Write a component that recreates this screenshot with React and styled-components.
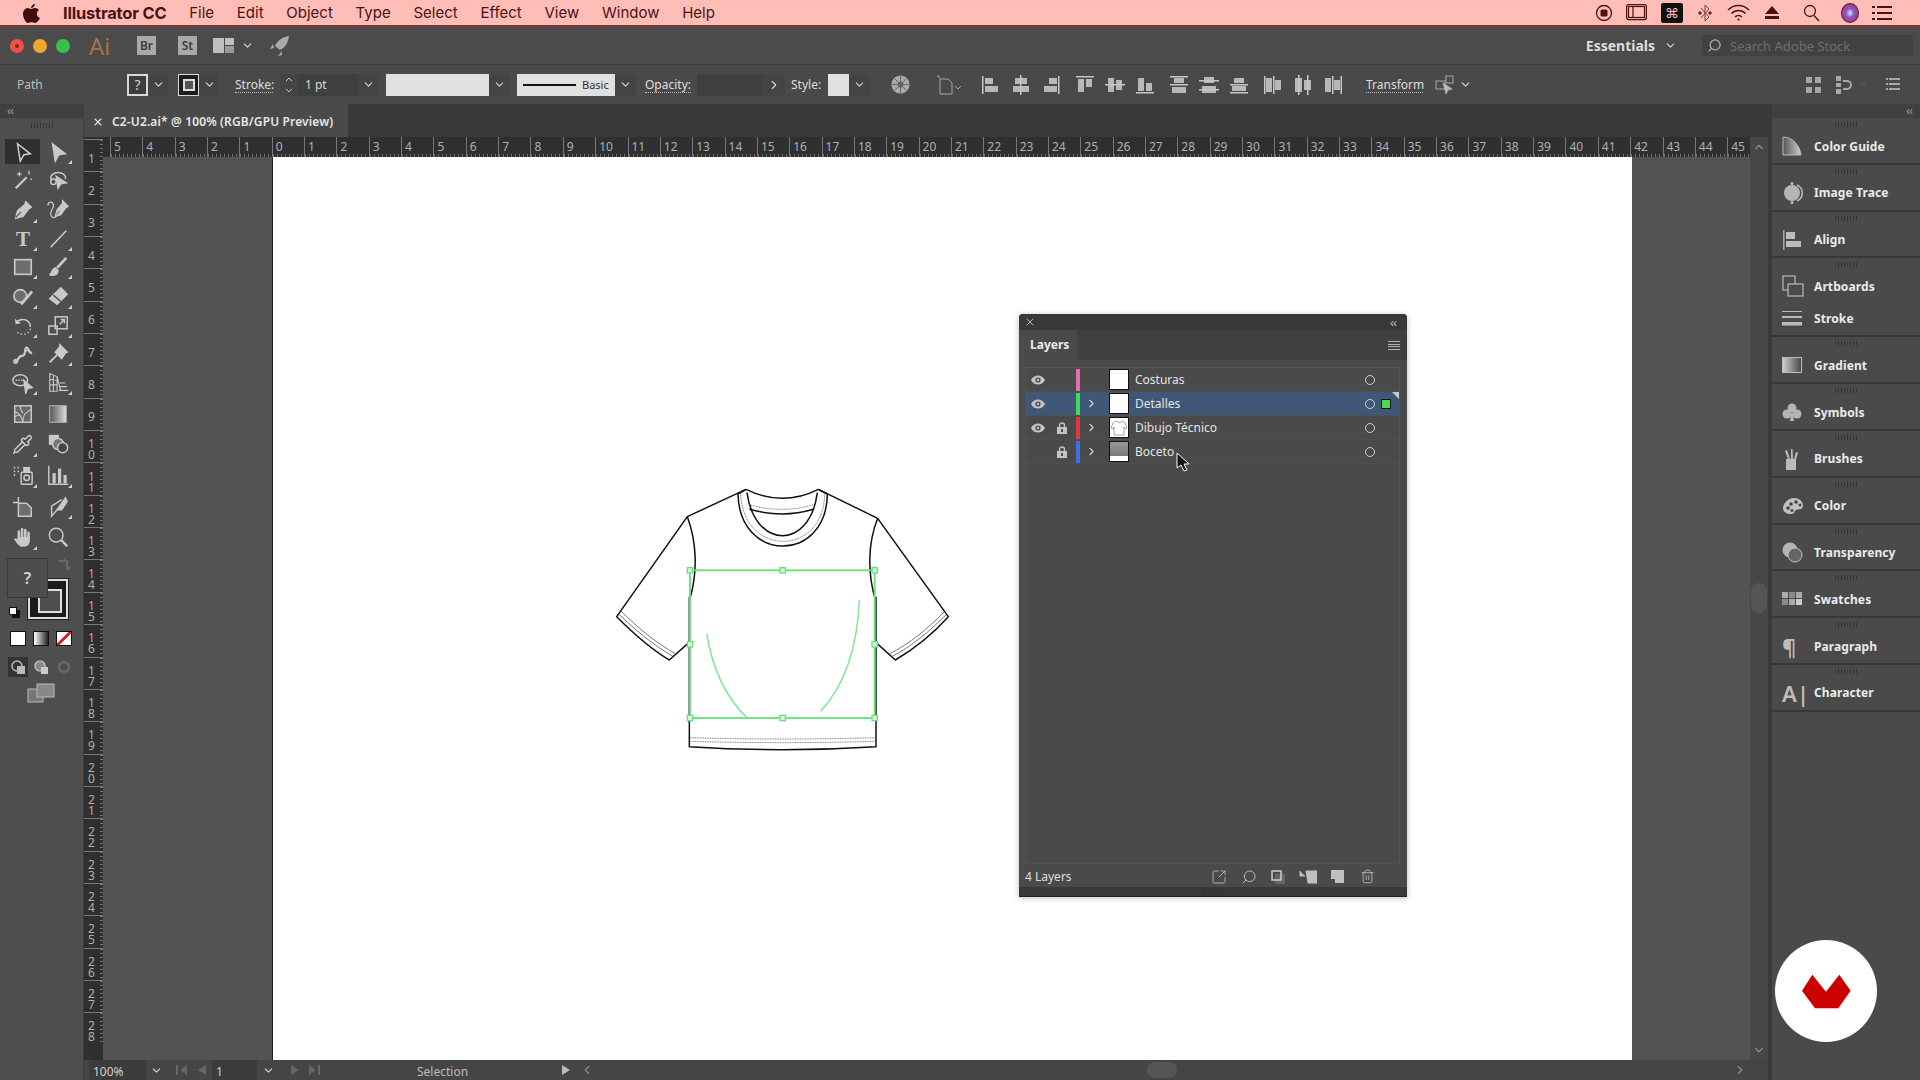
import React from 'react';
import styled, { createGlobalStyle } from 'styled-components';
import { Pipette, Search, Trash2, ChevronDown, ChevronUp, ChevronRight, ChevronLeft, X, SquareArrowOutUpRight } from 'lucide-react';

const UI_FONT = '"Noto Sans", "Open Sans", sans-serif';

const GlobalStyle = createGlobalStyle`
  html, body { margin: 0; padding: 0; background: #4a4a4a; overflow: hidden; }
  * { box-sizing: border-box; }
`;

const Root = styled.div`
  position: relative;
  width: 1920px;
  height: 1080px;
  display: flex;
  flex-direction: column;
  overflow: hidden;
  font-family: ${ UI_FONT };
  color: #ddd;
  font-size: 12px;
`;

/* ---------- mac menu bar ---------- */
const MenuBar = styled.div`
  height: 27px;
  flex: none;
  display: flex;
  align-items: center;
  background: #ffbdb8;
  border-bottom: 2px solid #7c3a36;
  padding-left: 22px;
  color: #4d1210;
  font-family: Inter, "Liberation Sans", sans-serif;
  font-size: 15px;
`;
const AppleMark = styled.svg`
  width: 18px;
  height: 20px;
  margin-right: 23px;
  fill: #3d0e0d;
`;
const MenuItem = styled.span`
  margin-right: 22.75px;
  font-weight: ${ p => p.$bold ? 700 : 400 };
  font-size: ${ p => p.$bold ? 16.5 : 15 }px;
  letter-spacing: ${ p => p.$bold ? '-0.2px' : '0' };
`;
const StatusIcons = styled.div`
  margin-left: auto;
  display: flex;
  align-items: center;
  padding-right: 28px;
`;
const StatusIcon = styled.svg`
  display: block;
  margin-left: ${ p => p.$ml }px;
`;

/* ---------- app title bar ---------- */
const TitleBar = styled.div`
  height: 38px;
  flex: none;
  display: flex;
  align-items: center;
  background: #4b4b4b;
  border-bottom: 1px solid #3a3a3a;
  padding-left: 10px;
`;
const Light = styled.span`
  width: 14px;
  height: 14px;
  border-radius: 50%;
  background: ${ p => p.$c };
  margin-right: 9px;
  display: flex;
  align-items: center;
  justify-content: center;
  &::after {
    content: '';
    width: 4px;
    height: 4px;
    border-radius: 50%;
    background: ${ p => p.$dot || 'transparent' };
  }
`;
const AiMark = styled.span`
  margin-left: 10px;
  width: 48px;
  color: #a8724e;
  font-size: 24px;
  line-height: 28px;
  font-family: "Open Sans", sans-serif;
`;
const BridgeBox = styled.span`
  width: 19px;
  height: 19px;
  margin-right: ${ p => p.$mr }px;
  background: #a9a9a9;
  color: #3c3c3c;
  font-size: 12px;
  font-weight: 600;
  text-align: center;
  line-height: 19px;
`;
const RocketIcon = styled.svg`
  margin-left: 10px;
`;
const WorkspaceEnd = styled.div`
  margin-left: auto;
  display: flex;
  align-items: center;
  padding-right: 7px;
`;
const Essentials = styled.span`
  font-size: 14px;
  font-weight: 700;
  color: #dcdcdc;
`;
const SearchStock = styled.div`
  width: 211px;
  height: 21px;
  margin-left: 17px;
  display: flex;
  align-items: center;
  padding-left: 5px;
  background: #424242;
  color: #6f6f6f;
  font-size: 13px;
  border-radius: 2px;
  gap: 8px;
`;
const FlippedSearch = styled(Search)`
  transform: scaleX(-1);
`;

/* ---------- control bar ---------- */
const ControlBar = styled.div`
  height: 39px;
  flex: none;
  display: flex;
  align-items: center;
  background: #494949;
  padding-left: 17px;
`;
const PathLabel = styled.span`
  width: 110px;
  color: #bdbdbd;
  font-size: 12px;
`;
const QuestionBox = styled.span`
  width: 21px;
  height: 22px;
  border: 2px solid #d8d8d8;
  background: #3d3d3d;
  color: #cfcfcf;
  font-size: 14px;
  line-height: 18px;
  text-align: center;
`;
const StrokeBox = styled.span`
  width: 21px;
  height: 22px;
  margin-left: ${ p => p.$ml }px;
  border: 1px solid #d8d8d8;
  background: #1c1c1c;
  display: flex;
  align-items: center;
  justify-content: center;
  &::after {
    content: '';
    width: 8px;
    height: 8px;
    border: 2px solid #ddd;
    background: #555;
  }
`;
const Chevron = styled.span`
  width: ${ p => p.$w || 20 }px;
  height: 22px;
  flex: none;
  margin-left: ${ p => p.$ml || 0 }px;
  display: flex;
  align-items: center;
  justify-content: center;
  background: ${ p => p.$flat ? 'transparent' : '#444' };
  color: #d8d8d8;
`;
const DotLabel = styled.span`
  margin-left: ${ p => p.$ml }px;
  width: ${ p => p.$w }px;
  flex: none;
  color: #dedede;
  font-size: 12px;
  line-height: 15px;
  white-space: nowrap;
  border-bottom: ${ p => p.$plain ? 'none' : '1px dotted #bbb' };
`;
const Spinner = styled.span`
  margin-left: 7px;
  width: 18px;
  height: 22px;
  display: flex;
  flex-direction: column;
  align-items: center;
  justify-content: center;
  background: #444;
  color: #ddd;
`;
const ValueField = styled.span`
  width: ${ p => p.$w }px;
  height: 22px;
  flex: none;
  margin-left: ${ p => p.$ml || 0 }px;
  padding-left: 7px;
  line-height: 22px;
  background: #3f3f3f;
  color: #d5d5d5;
`;
const LightSwatch = styled.span`
  width: ${ p => p.$w }px;
  height: 22px;
  flex: none;
  margin-left: ${ p => p.$ml }px;
  background: #e0e0e0;
`;
const StrokePreview = styled.span`
  width: 98px;
  height: 22px;
  margin-left: 8px;
  flex: none;
  display: flex;
  align-items: center;
  padding-left: 6px;
  background: #e0e0e0;
  color: #333;
  font-size: 11px;
  &::before {
    content: '';
    width: 53px;
    height: 2px;
    margin-right: 6px;
    background: #111;
  }
`;
const AlignGroups = styled.div`
  display: flex;
  margin-left: 14px;
  gap: 4px;
`;
const AlignGroup = styled.div`
  display: flex;
`;
const AlignCell = styled.span`
  width: 30px;
  display: flex;
  justify-content: center;
`;
const ControlEnd = styled.div`
  margin-left: auto;
  display: flex;
  align-items: center;
  padding-right: 20px;
`;
const ArrangeIcon = styled.svg`
  margin-left: 15px;
`;
const ListIcon = styled.svg`
  margin-left: 12px;
`;

/* ---------- workspace ---------- */
const Workspace = styled.div`
  flex: 1;
  min-height: 0;
  display: flex;
`;
const Toolbar = styled.div`
  width: 84px;
  flex: none;
  background: #4e4e4e;
  border-right: 1px solid #3f3f3f;
`;
const CollapseStrip = styled.div`
  height: 14px;
  background: #404040;
  color: #9a9a9a;
  font-size: 13px;
  line-height: 13px;
  padding: 0 ${ p => p.$right ? '8px' : '0' } 0 ${ p => p.$right ? '0' : '7px' };
  text-align: ${ p => p.$right ? 'right' : 'left' };
  letter-spacing: -1px;
`;
const Grip = styled.div`
  width: 22px;
  height: 5px;
  margin: ${ p => p.$m || '5px auto 9px' };
  background: repeating-linear-gradient(90deg, #2f2f2f 0 1px, transparent 1px 3px);
  opacity: .8;
`;
const ToolRow = styled.div`
  height: ${ p => p.$h }px;
  display: grid;
  grid-template-columns: 35px 35px;
  padding-left: 5px;
  align-items: center;
`;
const Tool = styled.span`
  position: relative;
  height: 25px;
  display: flex;
  align-items: center;
  justify-content: center;
  color: #c9c9c9;
  background: ${ p => p.$active ? '#2f2f2f' : 'transparent' };
  &::after {
    content: '';
    display: ${ p => p.$fly ? 'block' : 'none' };
    position: absolute;
    right: 3px;
    bottom: 0;
    border-left: 4px solid transparent;
    border-bottom: 4px solid #d0d0d0;
  }
`;
const ColorWell = styled.div`
  position: relative;
  height: 70px;
`;
const Tooltip = styled.span`
  position: absolute;
  z-index: 2;
  left: 7px;
  top: 6px;
  width: 41px;
  height: 40px;
  background: #4d4d4d;
  border: 1px solid #3a3a3a;
  color: #d5d5d5;
  font-size: 16px;
  font-weight: 600;
  line-height: 38px;
  text-align: center;
`;
const StrokeWell = styled.span`
  position: absolute;
  left: 28px;
  top: 27px;
  width: 40px;
  height: 40px;
  background: #1c1c1c;
  border: 2px solid #ddd;
  outline: 1px solid #222;
  &::after {
    content: '';
    position: absolute;
    left: 8px;
    top: 8px;
    width: 20px;
    height: 20px;
    border: 2px solid #ddd;
    background: #4e4e4e;
  }
`;
const DefaultColors = styled.span`
  position: absolute;
  left: 9px;
  top: 55px;
  width: 8px;
  height: 8px;
  background: #fff;
  border: 1px solid #111;
  box-shadow: 3px 3px 0 0 #111;
`;
const SwapArrow = styled.svg`
  position: absolute;
  left: 58px;
  top: 6px;
`;
const ModeRow = styled.div`
  height: ${ p => p.$h }px;
  display: grid;
  grid-template-columns: 22px 23px 24px;
  padding-left: 7px;
  align-items: center;
  justify-items: center;
`;
const ModeSwatch = styled.span`
  width: 16px;
  height: 15px;
  border: 1px solid #111;
  background: ${ p => p.$bg };
`;
const DrawMode = styled.span`
  width: ${ p => p.$w }px;
  height: 20px;
  display: flex;
  align-items: center;
  justify-content: center;
  background: ${ p => p.$active ? '#333' : 'transparent' };
`;
const ScreenMode = styled.div`
  display: flex;
  justify-content: center;
  height: 26px;
  align-items: center;
  padding-right: 2px;
`;

const Center = styled.div`
  width: 1684px;
  flex: none;
  display: flex;
  flex-direction: column;
`;
const TabRow = styled.div`
  height: 33px;
  flex: none;
  display: flex;
  background: #393939;
`;
const DocTab = styled.div`
  width: 264px;
  display: flex;
  align-items: center;
  padding: 2px 0 0 8px;
  gap: 8px;
  background: #4a4a4a;
  color: #e6e6e6;
  font-size: 12px;
  letter-spacing: .14px;
  font-weight: 600;
`;
const DocRow = styled.div`
  flex: 1;
  min-height: 0;
  display: flex;
`;
const LeftRuler = styled.div`
  width: 19px;
  flex: none;
  padding-top: 2px;
  background: #2f2f2f;
  overflow: hidden;
`;
const VCell = styled.div`
  height: 32.35px;
  display: flex;
  align-items: center;
  padding-top: 5px;
  border-top: 1px solid #777;
  background: repeating-linear-gradient(180deg, #707070 0 1px, transparent 1px 4px) right top / 3px 100% no-repeat;
`;
const VLabel = styled.span`
  width: 15px;
  padding: 0 4px;
  color: #b0b0b0;
  font-size: 12px;
  line-height: 11px;
  text-align: center;
  word-break: break-all;
`;
const MainCol = styled.div`
  width: 1647px;
  flex: none;
  display: flex;
  flex-direction: column;
`;
const TopRuler = styled.div`
  height: 20px;
  flex: none;
  display: flex;
  padding-left: 7px;
  background: #2f2f2f;
  overflow: hidden;
`;
const HCell = styled.div`
  width: 32.35px;
  flex: none;
  padding-left: 3px;
  border-left: 1px solid #777;
  color: #b0b0b0;
  font-size: 12px;
  line-height: 19px;
  background: repeating-linear-gradient(90deg, #707070 0 1px, transparent 1px 4px) left bottom / 100% 3px no-repeat;
`;
const Canvas = styled.div`
  flex: 1;
  min-height: 0;
  display: flex;
  background: #535353;
  padding-left: 169px;
`;
const Artboard = styled.div`
  position: relative;
  width: 1360px;
  height: 100%;
  background: #fff;
  border-left: 1px solid #222;
`;
const ShirtDrawing = styled.svg`
  position: absolute;
  left: 327px;
  top: 313px;
`;
const VScroll = styled.div`
  width: 18px;
  flex: none;
  display: flex;
  flex-direction: column;
  align-items: center;
  justify-content: space-between;
  padding: 3px 0;
  background: #474747;
  color: #8a8a8a;
`;
const VThumb = styled.span`
  position: absolute;
  left: 1751px;
  top: 583px;
  width: 16px;
  height: 30px;
  border-radius: 8px;
  background: #555;
`;
const StatusBar = styled.div`
  height: 20px;
  flex: none;
  display: flex;
  align-items: center;
  padding-left: 5px;
  background: #454545;
  color: #d0d0d0;
`;
const StatusField = styled.span`
  width: ${ p => p.$w }px;
  height: 20px;
  flex: none;
  padding-left: 4px;
  line-height: 24px;
  background: #3c3c3c;
  margin-left: ${ p => p.$ml || 0 }px;
`;
const NavArrow = styled.svg`
  flex: none;
  margin-left: ${ p => p.$ml }px;
`;
const StatusText = styled.span`
  margin-left: ${ p => p.$ml }px;
  width: ${ p => p.$w }px;
  flex: none;
  padding-top: 3px;
  color: #bdbdbd;
`;
const HScroll = styled.div`
  flex: 1;
  display: flex;
  align-items: center;
  justify-content: space-between;
  padding: 0 21px 0 10px;
  color: #8a8a8a;
`;
const HThumb = styled.span`
  position: absolute;
  left: 1147px;
  top: 1062px;
  width: 30px;
  height: 16px;
  border-radius: 8px;
  background: #555;
`;

/* ---------- dock ---------- */
const Dock = styled.div`
  flex: 1;
  background: #4a4a4a;
  border-left: 4px solid #3a3a3a;
`;
const DockGroup = styled.div`
  border-bottom: 2px solid #383838;
  padding-top: 4px;
  height: ${ p => p.$double ? 79 : 46.8 }px;
`;
const DockItem = styled.div`
  height: 28px;
  margin-bottom: 4px;
  display: flex;
  align-items: center;
  padding-left: 10px;
  font-size: 12px;
  font-weight: 700;
  color: #ebebeb;
  letter-spacing: .1px;
`;
const DockIcon = styled.span`
  width: 32px;
  flex: none;
  display: flex;
  align-items: center;
  color: #bdbdbd;
  font-size: 22px;
  line-height: 24px;
  font-weight: 600;
`;

/* ---------- layers panel ---------- */
const LayersPanel = styled.div`
  position: absolute;
  left: 1019px;
  top: 314px;
  width: 388px;
  height: 583px;
  display: flex;
  flex-direction: column;
  background: #4a4a4a;
  border-radius: 4px 4px 0 0;
  box-shadow: 0 1px 6px rgba(0, 0, 0, .25);
`;
const PanelHead = styled.div`
  height: 16px;
  flex: none;
  display: flex;
  align-items: center;
  justify-content: space-between;
  padding: 0 11px 0 5px;
  background: #393939;
  border-radius: 4px 4px 0 0;
  color: #b5b5b5;
  font-size: 13px;
  letter-spacing: -1px;
`;
const PanelTabs = styled.div`
  height: 30px;
  flex: none;
  display: flex;
  align-items: center;
  justify-content: space-between;
  padding-right: 7px;
  background: #404040;
`;
const LayersTab = styled.span`
  width: 58px;
  height: 30px;
  padding-left: 11px;
  line-height: 30px;
  background: #4a4a4a;
  font-weight: 700;
  font-size: 12px;
  color: #ececec;
`;
const MenuLines = styled.span`
  width: 12px;
  height: 9px;
  background: repeating-linear-gradient(180deg, #b0b0b0 0 1px, transparent 1px 2.6px);
`;
const LayerList = styled.div`
  flex: 1;
  margin: 7px 7px 0 6px;
  border: 1px solid #525252;
  border-top-color: #555;
`;
const LayerRow = styled.div`
  position: relative;
  height: 24px;
  display: flex;
  align-items: center;
  border-bottom: 1px solid #505050;
  background: ${ p => p.$selected ? '#3f5878' : 'transparent' };
  &::after {
    content: '';
    display: ${ p => p.$selected ? 'block' : 'none' };
    position: absolute;
    right: 0;
    top: 0;
    border-left: 7px solid transparent;
    border-top: 7px solid #c8c8c8;
  }
`;
const VisCell = styled.span`
  width: 24px;
  flex: none;
  display: flex;
  justify-content: center;
`;
const LayerColor = styled.span`
  width: 4px;
  height: 22px;
  flex: none;
  margin-left: 2px;
  background: ${ p => p.$c };
`;
const Expand = styled.span`
  width: 22px;
  flex: none;
  display: flex;
  justify-content: center;
  color: #d5d5d5;
`;
const Thumb = styled.span`
  width: 20px;
  height: 21px;
  flex: none;
  margin-left: 7px;
  border: 1px solid #111;
  background: ${ p => p.$bg || '#fff' };
  overflow: hidden;
`;
const LayerName = styled.span`
  margin-left: 6px;
  flex: 1;
  color: #e4e4e4;
  font-size: 12px;
`;
const TargetRing = styled.span`
  width: 10px;
  height: 10px;
  flex: none;
  border: 1px solid #d0d0d0;
  border-radius: 50%;
  margin-right: ${ p => p.$selected ? '7px' : '24px' };
`;
const SelectedDot = styled.span`
  width: 8px;
  height: 8px;
  flex: none;
  margin-right: 9px;
  background: #4fd84f;
  outline: 1px solid #111;
`;
const PanelFoot = styled.div`
  height: 23px;
  flex: none;
  display: flex;
  align-items: center;
  padding: 2px 0 0 6px;
  color: #ddd;
`;
const FootIcons = styled.div`
  margin-left: auto;
  display: flex;
  align-items: center;
  padding-right: 25px;
  color: #bdbdbd;
`;
const FootCell = styled.span`
  width: 29.6px;
  display: flex;
  justify-content: center;
`;
const ResizeStrip = styled.div`
  height: 10px;
  flex: none;
  background: #383838;
  border-bottom: 1px solid #222;
`;
const CursorMark = styled.svg`
  position: absolute;
  left: 157px;
  top: 138px;
`;
const LogoBadge = styled.svg`
  position: absolute;
  left: 1775px;
  top: 940px;
`;

/* ---------- drawn icons ---------- */
const G = '#c9c9c9';
const Ic = ({ s = 22, children }) => (
  <svg width={ s } height={ s } viewBox='0 0 24 24' fill='none' stroke={ G } strokeWidth='1.6'>{ children }</svg>
);

const TOOL_ICONS = {
  select: <Ic><path d='M6 3l14 11-7 1-4 7z' stroke='#d4d4d4' /></Ic>,
  direct: <Ic><path d='M6 3l14 11-7 1-4 7z' fill={ G } /></Ic>,
  wand: <Ic><path d='M4 21L16 9' strokeWidth='2.6' /><path d='M8 3v5M5.500 5.500h5M18 2l1 2-1 2M20 11h2' strokeWidth='1.3' /></Ic>,
  lasso: <Ic><path d='M5 13c-3-6 3-10 9-9 5 1 7 4 6 7' /><circle cx='7' cy='14' r='3' /><path d='M10 8l11 7-6 1-3 5z' fill={ G } /></Ic>,
  pen: <Ic><path d='M15 3l6 6-3 2-6 8-8 2 2-8 8-7z' fill={ G } /><path d='M4 20l6-6' stroke='#4e4e4e' strokeWidth='1.2' /></Ic>,
  curve: <Ic><path d='M17 2l6 6-3 2-5 7-6 2 2-7 6-7z' fill={ G } /><path d='M10 17l4-4' stroke='#4e4e4e' strokeWidth='1' /><path d='M1 7c0-4 5-5 6-1s-4 7-3 11 4 4 6 2' strokeWidth='1.400' /></Ic>,
  type: <Ic><text x='12' y='20' textAnchor='middle' fontFamily='"Liberation Serif", serif' fontSize='23' fontWeight='700' fill={ G } stroke='none'>T</text></Ic>,
  line: <Ic><path d='M4 21L21 3' strokeWidth='1.8' /></Ic>,
  rect: <Ic><rect x='3' y='4' width='18' height='16' fill='#6e6e6e' strokeWidth='1.8' /></Ic>,
  brush: <Ic><path d='M21 2L11 13' strokeWidth='3' /><path d='M5 21c-2 0-2-1-1-2 2-1 1-5 5-6l3 3c0 4-4 5-7 5z' fill={ G } /></Ic>,
  shaper: <Ic><circle cx='9' cy='12' r='7' fill='#6e6e6e' strokeWidth='1.8' /><path d='M10 21L22 7' strokeWidth='3' /></Ic>,
  eraser: <Ic><path d='M15 3l7 7-11 11-8-6z' fill={ G } /><path d='M7 11l8 7' stroke='#4e4e4e' /></Ic>,
  rotate: <Ic><path d='M5 8c4-5 15-4 15 5' /><path d='M3 4l1 6 6-1z' fill={ G } stroke='none' /><path d='M20 15c-1 6-9 8-14 4' strokeDasharray='1.500 2.500' /></Ic>,
  scale: <Ic><rect x='9' y='2' width='13' height='13' /><rect x='2' y='12' width='9' height='9' /><path d='M14 10l5-5M15 5h4v4' /></Ic>,
  puppet: <Ic><path d='M3 20c5 0 3-6 8-6s2-9 5-9 1 6 6 6' strokeWidth='2.4' /><circle cx='4' cy='20' r='2' /><circle cx='16' cy='7' r='1.500' /></Ic>,
  pin: <Ic><path d='M14 2l8 8-2 1-4 6-7-7 5-6z' fill={ G } /><path d='M11 13l-8 8' strokeWidth='2' /></Ic>,
  free: <Ic><ellipse cx='9' cy='9' rx='8' ry='6' /><path d='M4 9h9' strokeDasharray='1.500 1.500' /><path d='M13 9l9 8-5 1-2 5z' fill={ G } /></Ic>,
  persp: <Ic><path d='M3 2l8 3v16H3zM3 8l8 1M3 14h8M7 3v18M11 5l4 16M14 12h6M14 16h8M13 20h10' strokeWidth='1.2' /></Ic>,
  mesh: <Ic><rect x='3' y='3' width='18' height='18' fill='#666' /><path d='M3 9c6 3 8 7 9 12M21 7c-6 3-9 5-9 14M9 3c0 4 1 6 3 8M3 15c3-2 5-2 7-1' strokeWidth='1.200' /></Ic>,
  gradient: <Ic><defs><linearGradient id='toolGrad' x1='0' x2='1' y1='0' y2='0'><stop offset='0' stopColor='#555' /><stop offset='1' stopColor='#ddd' /></linearGradient></defs><rect x='3' y='3' width='18' height='18' fill='url(#toolGrad)' stroke='#bbb' strokeWidth='1' /></Ic>,
  dropper: <Pipette size={ 21 } strokeWidth={ 1.7 } />,
  blend: <Ic><rect x='2' y='2' width='11' height='11' fill={ G } stroke='none' /><circle cx='12' cy='12' r='6' fill='#777' /><circle cx='17' cy='16' r='5.500' fill='#444' /></Ic>,
  spray: <Ic><rect x='10' y='9' width='12' height='13' rx='1' /><circle cx='16' cy='15' r='3' /><rect x='13' y='4' width='6' height='5' fill={ G } /><path d='M2 4h1.500M6 4h1.500M2 8h1.500M6 8h1.500M2 12h1.500' strokeWidth='2' /></Ic>,
  graph: <Ic><path d='M2 2v20h21' /><rect x='6' y='10' width='3.500' height='11' fill={ G } stroke='none' /><rect x='12' y='5' width='3.500' height='16' fill={ G } stroke='none' /><rect x='18' y='12' width='3.500' height='9' fill={ G } stroke='none' /></Ic>,
  artboard: <Ic><path d='M7 1v7M1 7h7' /><path d='M7 8h9l5 5v9H7z' fill='#6e6e6e' /></Ic>,
  slice: <Ic><path d='M20 2l2 4-6 9H11z' fill={ G } /><path d='M11 15l-6 7V11l11-7' /></Ic>,
  hand: <Ic><path d='M7.500 13V6M11 12V3.500M14.500 12V4.500M18 13V7.500' strokeWidth='2.8' strokeLinecap='round' /><path d='M6 12h13.500v4c0 4-3 6.500-6 6.500h-3C7.500 22.500 6 19 2 14.500c1-1.500 3-1 4 .5z' fill={ G } stroke='none' /></Ic>,
  zoom: <Ic><circle cx='10' cy='10' r='7.500' /><path d='M15.500 15.500L22 22' strokeWidth='2.6' /></Ic>
};

const TOOLS = [
  { h: 27, l: ['select', 0], r: ['direct', 1], active: true },
  { h: 30, l: ['wand', 0], r: ['lasso', 0] },
  { h: 30, l: ['pen', 1], r: ['curve', 0] },
  { h: 27, l: ['type', 1], r: ['line', 1] },
  { h: 29, l: ['rect', 1], r: ['brush', 1] },
  { h: 30, l: ['shaper', 1], r: ['eraser', 1] },
  { h: 29, l: ['rotate', 1], r: ['scale', 1] },
  { h: 27, l: ['puppet', 1], r: ['pin', 1] },
  { h: 31, l: ['free', 1], r: ['persp', 1] },
  { h: 31, l: ['mesh', 0], r: ['gradient', 0] },
  { h: 30, l: ['dropper', 1], r: ['blend', 0] },
  { h: 32, l: ['spray', 1], r: ['graph', 1] },
  { h: 31, l: ['artboard', 0], r: ['slice', 1] },
  { h: 30, l: ['hand', 1], r: ['zoom', 0] }
];

// rect lists for the align buttons in the control bar
const ALIGN = [
  [[[1, 1, 1.5, 18]], [[4, 3, 8, 6], [4, 11, 13, 6]]],
  [[[9, 0, 1.5, 20]], [[4, 3, 12, 6], [2, 11, 16, 6]]],
  [[[17, 1, 1.5, 18]], [[8, 3, 8, 6], [3, 11, 13, 6]]],
  [[[1, 1, 18, 1.5]], [[3, 4, 6, 13], [11, 4, 6, 8]]],
  [[[0, 9, 20, 1.5]], [[3, 3, 6, 14], [11, 5, 6, 10]]],
  [[[1, 17, 18, 1.5]], [[3, 3, 6, 13], [11, 8, 6, 8]]],
  [[[1, 1, 18, 1.5], [1, 9, 18, 1.5]], [[5, 3, 10, 5], [3, 12, 14, 6]]],
  [[[0, 5, 20, 1.5], [0, 14, 20, 1.5]], [[5, 2, 10, 6], [3, 11, 14, 7]]],
  [[[1, 9, 18, 1.5], [1, 17, 18, 1.5]], [[5, 3, 10, 5], [3, 11, 14, 5]]],
  [[[1, 1, 1.5, 18], [10, 1, 1.5, 18]], [[3, 3, 6, 14], [12, 5, 6, 10]]],
  [[[5, 0, 1.5, 20], [14, 0, 1.5, 20]], [[2, 3, 7, 14], [11, 5, 7, 10]]],
  [[[9, 1, 1.5, 18], [17.5, 1, 1.5, 18]], [[2, 3, 6, 14], [11, 5, 6, 10]]]
];

const AlignIcon = ({ spec }) => (
  <svg width='20' height='20' viewBox='0 0 20 20'>
    { spec[1].map((r, i) => <rect key={ i } x={ r[0] } y={ r[1] } width={ r[2] } height={ r[3] } fill='#b8b8b8' />) }
    { spec[0].map((r, i) => <rect key={ i } x={ r[0] } y={ r[1] } width={ r[2] } height={ r[3] } fill='#c8c8c8' />) }
  </svg>
);

const DOCK_ICONS = {
  guide: <svg width='20' height='20' viewBox='0 0 20 20'><defs><linearGradient id='dockGuide' x1='0' x2='1'><stop offset='0' stopColor='#555' /><stop offset='1' stopColor='#cfcfcf' /></linearGradient></defs><path d='M1 1c9 0 17 8 18 18H1z' fill='url(#dockGuide)' stroke='#bbb' /></svg>,
  trace: <svg width='22' height='24' viewBox='0 0 22 24'><circle cx='10' cy='12' r='8' fill='#b5b5b5' /><path d='M15 4c7 3 7 13 0 16' stroke='#bbb' strokeWidth='1.500' fill='none' /><circle cx='10' cy='2.500' r='1.500' fill='#bbb' /><circle cx='10' cy='21.500' r='1.500' fill='#bbb' /></svg>,
  align: <svg width='20' height='22' viewBox='0 0 20 22'><rect x='1' y='1' width='1.500' height='20' fill='#aaa' /><rect x='4' y='3' width='9' height='7' fill='#bbb' /><rect x='4' y='12' width='15' height='6' fill='#bbb' /></svg>,
  artboards: <svg width='22' height='22' viewBox='0 0 22 22' fill='none' stroke='#bbb' strokeWidth='1.200'><rect x='1' y='1' width='12' height='14' /><rect x='6' y='9' width='15' height='12' fill='#4a4a4a' /></svg>,
  stroke: <svg width='21' height='16' viewBox='0 0 21 16'><rect y='1' width='20' height='1' fill='#bbb' /><rect y='6' width='20' height='2' fill='#bbb' /><rect y='12' width='20' height='3.500' fill='#bbb' /></svg>,
  gradient: <svg width='20' height='16' viewBox='0 0 20 16'><defs><linearGradient id='dockGrad' x1='0' x2='1'><stop offset='0' stopColor='#d0d0d0' /><stop offset='1' stopColor='#444' /></linearGradient></defs><rect x='.5' y='.5' width='19' height='15' fill='url(#dockGrad)' stroke='#bbb' /></svg>,
  symbols: <svg width='20' height='20' viewBox='0 0 20 20' fill='#b5b5b5'><circle cx='10' cy='6' r='4.500' /><circle cx='5' cy='12' r='4.500' /><circle cx='15' cy='12' r='4.500' /><path d='M9 11h2l1 8H8z' /></svg>,
  brushes: <svg width='18' height='24' viewBox='0 0 18 24' fill='#bbb'><path d='M4 12h10v11H4z' /><path d='M6 12L3 4l2-1 3 9zM9 12V2h1.500l.5 10zM12 12l2-7 2 .5-2 7z' /></svg>,
  palette: <svg width='22' height='18' viewBox='0 0 22 18'><path d='M12 1c6 0 9 4 9 8s-5 3-7 4-1 4-5 4-8-2-8-6 5-10 11-10z' fill='#c0c0c0' /><circle cx='6' cy='11' r='1.800' fill='#444' /><circle cx='10' cy='13.500' r='1.500' fill='#444' /><circle cx='9' cy='7' r='1.800' fill='#444' /><circle cx='14' cy='5' r='1.800' fill='#444' /><circle cx='18' cy='8' r='1.500' fill='#444' /></svg>,
  transparency: <svg width='22' height='22' viewBox='0 0 22 22'><circle cx='8' cy='8' r='7.500' fill='#b5b5b5' /><circle cx='13' cy='13' r='7' fill='#666' stroke='#c0c0c0' /></svg>,
  swatches: <svg width='20' height='14' viewBox='0 0 20 14' fill='#aaa'><rect width='6' height='6' /><rect x='7' width='6' height='6' fill='#8a8a8a' /><rect x='14' width='6' height='6' /><rect y='7' width='6' height='6' fill='#8a8a8a' /><rect x='7' y='7' width='6' height='6' /><rect x='14' y='7' width='6' height='6' fill='#ccc' /></svg>
};

const DOCK = [
  [['guide', 'Color Guide']],
  [['trace', 'Image Trace']],
  [['align', 'Align']],
  [['artboards', 'Artboards'], ['stroke', 'Stroke']],
  [['gradient', 'Gradient']],
  [['symbols', 'Symbols']],
  [['brushes', 'Brushes']],
  [['palette', 'Color']],
  [['transparency', 'Transparency']],
  [['swatches', 'Swatches']],
  [[null, 'Paragraph', '¶']],
  [[null, 'Character', 'A|']]
];

const EyeIcon = () => (
  <svg width='14' height='10' viewBox='0 0 14 10'>
    <path d='M0 5c3-6 11-6 14 0-3 6-11 6-14 0z' fill='#c4c4c4' />
    <circle cx='7' cy='5' r='2.600' fill='#4a4a4a' />
    <circle cx='7' cy='5' r='1.200' fill='#c4c4c4' />
  </svg>
);
const LockIcon = () => (
  <svg width='10' height='12' viewBox='0 0 10 12'>
    <path d='M2.500 6V3.500a2.500 2.500 0 0 1 5 0V6' fill='none' stroke='#c4c4c4' strokeWidth='1.400' />
    <rect y='5' width='10' height='7' fill='#c4c4c4' />
    <rect x='4' y='7' width='2' height='3' fill='#4a4a4a' />
  </svg>
);

const LAYERS = [
  { name: 'Costuras', color: '#e26fb0', eye: true },
  { name: 'Detalles', color: '#3ddc55', eye: true, arrow: true, selected: true },
  { name: 'Dibujo Técnico', color: '#e0383f', eye: true, lock: true, arrow: true, shirt: true },
  { name: 'Boceto', color: '#3f6fe0', lock: true, arrow: true, sketch: true }
];

const RULER_TOP = [5, 4, 3, 2, 1, ...Array.from({ length: 46 }, (_, i) => i)];
const RULER_LEFT = Array.from({ length: 28 }, (_, i) => i + 1);

const SMALL_CHEV = <ChevronDown size={ 13 } strokeWidth={ 2 } />;

const Shirt = () => (
  <ShirtDrawing width='360' height='290' viewBox='0 0 1080 870' fill='none'>
    <g stroke='#111' strokeWidth='4.500' strokeLinejoin='round'>
      <path d='M438 58L262 140 50 440C100 490 150 535 208 570L270 515' />
      <path d='M655 58L833 145 1045 440C1000 490 945 535 886 570L825 515' />
      <path d='M438 58Q548 112 655 58' />
      <path d='M262 140C292 220 292 310 270 385M833 145C803 220 803 310 825 385' />
      <path d='M268 380V830Q548 848 828 830V380' />
      <path d='M414 72C418 280 680 280 682 72L655 58M414 72L438 58' />
      <path d='M441 68C465 240 630 240 652 68' />
      <path d='M448 118Q548 146 640 118' />
    </g>
    <g stroke='#444' strokeWidth='2.200'>
      <path d='M422 70C428 262 672 262 674 70' strokeDasharray='3 2' />
      <path d='M448 104Q548 132 640 104' strokeDasharray='3 2' />
      <path d='M62 422C115 475 170 520 228 552M56 432C108 482 160 525 220 560' />
      <path d='M1033 425C985 475 930 520 868 552M1040 433C990 482 935 530 875 560' />
      <path d='M270 803Q548 811 826 803' strokeDasharray='3 2' />
      <path d='M270 814Q548 822 826 814' strokeDasharray='3 2' />
    </g>
    <g stroke='#68e07c' strokeWidth='5.500'>
      <rect x='270' y='301' width='554' height='443' />
      <path d='M320 492C340 610 385 690 442 744M778 390C772 540 730 650 662 724' strokeWidth='4.500' stroke='#85e396' />
    </g>
    { [[270, 301], [548, 301], [824, 301], [270, 523], [824, 523], [270, 744], [548, 744], [824, 744]].map(([x, y]) => (
      <rect key={ `${ x }-${ y }` } x={ x - 8 } y={ y - 8 } width='16' height='16' fill='#d9fbdc' stroke='#68e07c' strokeWidth='4' />
    )) }
  </ShirtDrawing>
);

const LayerThumb = ({ layer }) => {
  if (layer.sketch) {
    return <Thumb $bg='linear-gradient(180deg, #999 0, #777 75%, #fff 75%)' />;
  }
  return (
    <Thumb>
      { layer.shirt && (
        <svg width='18' height='19' viewBox='0 0 18 19' fill='none' stroke='#888' strokeWidth='.8'>
          <path d='M6 3L3 5 1 10l2 1 1-2v8h10V9l1 2 2-1-2-5-3-2-2 2z' />
        </svg>
      ) }
    </Thumb>
  );
};

const MenuExtras = () => (
  <StatusIcons>
    <StatusIcon $ml={ 0 } width='18' height='18' viewBox='0 0 18 18'><circle cx='9' cy='9' r='7.500' fill='none' stroke='#4d1210' strokeWidth='1.300' /><rect x='5.500' y='5.500' width='7' height='7' rx='1.500' fill='#4d1210' /></StatusIcon>
    <StatusIcon $ml={ 13 } width='21' height='17' viewBox='0 0 21 17' fill='none' stroke='#4d1210' strokeWidth='1.200'><rect x='.6' y='.6' width='19.800' height='15' rx='2' /><rect x='2.500' y='2.500' width='16' height='11' /><path d='M7 2.500v11' /></StatusIcon>
    <StatusIcon $ml={ 14 } width='22' height='20' viewBox='0 0 22 20'><rect width='22' height='20' rx='2' fill='#111' /><text x='11' y='15' textAnchor='middle' fontSize='14' fill='#ffbdb8'>⌘</text></StatusIcon>
    <StatusIcon $ml={ 15 } width='14' height='20' viewBox='0 0 14 20' fill='none' stroke='#6e3533' strokeWidth='.9'><path d='M3 5l8 9-4 4V2l4 4-8 9' /><circle cx='2' cy='10' r='1.300' fill='#4d1210' /><circle cx='12' cy='10' r='1.300' fill='#4d1210' /></StatusIcon>
    <StatusIcon $ml={ 15 } width='23' height='17' viewBox='0 0 23 17' fill='none' stroke='#4d1210' strokeWidth='1.400'><path d='M1 6c6-6 15-6 21 0M4.500 9.500c4-4 10-4 14 0M8 13c2-2 5-2 7 0' /><circle cx='11.500' cy='15.500' r='1.100' fill='#4d1210' stroke='none' /></StatusIcon>
    <StatusIcon $ml={ 15 } width='14' height='13' viewBox='0 0 14 13' fill='#4d1210'><path d='M7 0l7 8H0z' /><rect y='10' width='14' height='3' /></StatusIcon>
    <StatusIcon $ml={ 24 } width='17' height='18' viewBox='0 0 17 18' fill='none' stroke='#4d1210' strokeWidth='1.300'><circle cx='7' cy='7' r='5.500' /><path d='M11 11.500L16 17' /></StatusIcon>
    <StatusIcon $ml={ 21 } width='18' height='20' viewBox='0 0 18 20'><defs><radialGradient id='siri'><stop offset='0' stopColor='#e8e8ff' /><stop offset='.45' stopColor='#7a5ad0' /><stop offset='.8' stopColor='#c03a78' /><stop offset='1' stopColor='#1c1a3c' /></radialGradient></defs><ellipse cx='9' cy='10' rx='9' ry='10' fill='url(#siri)' /></StatusIcon>
    <StatusIcon $ml={ 13 } width='20' height='14' viewBox='0 0 20 14' fill='#4d1210'><rect width='3' height='2' /><rect x='5' width='15' height='2' /><rect y='6' width='3' height='2' /><rect x='5' y='6' width='15' height='2' /><rect y='12' width='3' height='2' /><rect x='5' y='12' width='15' height='2' /></StatusIcon>
  </StatusIcons>
);

const App = () => (
  <Root>
    <GlobalStyle />
    <MenuBar>
      <AppleMark viewBox='0 0 18 20'>
        <path d='M13 1c0 2-2 4-4 4 0-2 2-4 4-4zM9 6c1 0 2-1 4-1 1 0 3 .5 4 2-3 2-3 6 1 8-1 2-3 5-5 5-1 0-2-1-3.500-1S7 20 6 20c-2 0-5-5-5-9 0-3 2-6 5-6 1 0 2 1 3 1z' />
      </AppleMark>
      <MenuItem $bold>Illustrator CC</MenuItem>
      <MenuItem>File</MenuItem>
      <MenuItem>Edit</MenuItem>
      <MenuItem>Object</MenuItem>
      <MenuItem>Type</MenuItem>
      <MenuItem>Select</MenuItem>
      <MenuItem>Effect</MenuItem>
      <MenuItem>View</MenuItem>
      <MenuItem>Window</MenuItem>
      <MenuItem>Help</MenuItem>
      <MenuExtras />
    </MenuBar>

    <TitleBar>
      <Light $c='#f0504c' $dot='#8c1f1c' />
      <Light $c='#f0a82c' />
      <Light $c='#35c24a' />
      <AiMark>Ai</AiMark>
      <BridgeBox $mr={ 22 }>Br</BridgeBox>
      <BridgeBox $mr={ 16 }>St</BridgeBox>
      <svg width='21' height='15' viewBox='0 0 21 15' fill='#c0c0c0'><rect width='11' height='15' /><rect x='12' width='9' height='7' /><rect x='12' y='8' width='9' height='7' fill='#999' /></svg>
      <Chevron $flat $w={ 26 }>{ SMALL_CHEV }</Chevron>
      <RocketIcon width='20' height='22' viewBox='0 0 20 22' fill='#a9a9a9'><path d='M19 1C12 2 7 6 5 11l5 4c5-2 8-7 9-14zM3 9L0 14l4-1zM12 16l-4 5 4-1z' /></RocketIcon>
      <WorkspaceEnd>
        <Essentials>Essentials</Essentials>
        <Chevron $flat $w={ 30 }>{ SMALL_CHEV }</Chevron>
        <SearchStock>
          <FlippedSearch size={ 15 } color='#b0b0b0' />
          <span>Search Adobe Stock</span>
        </SearchStock>
      </WorkspaceEnd>
    </TitleBar>

    <ControlBar>
      <PathLabel>Path</PathLabel>
      <QuestionBox>?</QuestionBox>
      <Chevron>{ SMALL_CHEV }</Chevron>
      <StrokeBox $ml={ 10 } />
      <Chevron>{ SMALL_CHEV }</Chevron>
      <DotLabel $ml={ 16 } $w={ 38 }>Stroke:</DotLabel>
      <Spinner><ChevronUp size={ 12 } /><ChevronDown size={ 12 } /></Spinner>
      <ValueField $w={ 60 }>1 pt</ValueField>
      <Chevron>{ SMALL_CHEV }</Chevron>
      <LightSwatch $ml={ 8 } $w={ 103 } />
      <Chevron>{ SMALL_CHEV }</Chevron>
      <StrokePreview>Basic</StrokePreview>
      <Chevron $w={ 21 }>{ SMALL_CHEV }</Chevron>
      <DotLabel $ml={ 9 } $w={ 46 }>Opacity:</DotLabel>
      <ValueField $ml={ 6 } $w={ 66 } />
      <Chevron $w={ 22 }><ChevronRight size={ 14 } /></Chevron>
      <DotLabel $ml={ 6 } $w={ 31 } $plain>Style:</DotLabel>
      <LightSwatch $ml={ 6 } $w={ 21 } />
      <Chevron $w={ 21 }>{ SMALL_CHEV }</Chevron>
      <Chevron $flat $ml={ 20 } $w={ 20 }>
        <svg width='19' height='19' viewBox='0 0 20 20'><circle cx='10' cy='10' r='9.500' fill='#aaa' /><circle cx='10' cy='10' r='3' fill='#555' /><path d='M10 1v18M1 10h18M4 4l12 12M16 4L4 16' stroke='#666' /></svg>
      </Chevron>
      <Chevron $flat $ml={ 26 } $w={ 26 }>
        <svg width='26' height='20' viewBox='0 0 26 20' fill='none' stroke='#a8a8a8'><path d='M4 4h8l4 4v11H4zM1 1h2v2M19 11l3 3 3-3' /></svg>
      </Chevron>
      <AlignGroups>
        { [0, 3, 6, 9].map(start => (
          <AlignGroup key={ start }>
            { ALIGN.slice(start, start + 3).map((spec, i) => <AlignCell key={ i }><AlignIcon spec={ spec } /></AlignCell>) }
          </AlignGroup>
        )) }
      </AlignGroups>
      <DotLabel $ml={ 18 } $w={ 57 }>Transform</DotLabel>
      <Chevron $flat $ml={ 12 } $w={ 20 }>
        <svg width='20' height='20' viewBox='0 0 20 20' fill='none' stroke='#a8a8a8'><rect x='1' y='6' width='9' height='8' /><rect x='11' y='1' width='7' height='7' /><path d='M8 8l9 6-4 1-2 4z' fill='#bbb' /></svg>
      </Chevron>
      <Chevron $flat>{ SMALL_CHEV }</Chevron>
      <ControlEnd>
        <svg width='15' height='16' viewBox='0 0 15 16' fill='#a8a8a8'><rect width='6' height='6' /><rect x='9' width='6' height='6' /><rect y='10' width='6' height='6' /><rect x='9' y='10' width='6' height='6' /></svg>
        <ArrangeIcon width='16' height='20' viewBox='0 0 16 20' fill='#a8a8a8'><rect y='1' width='5' height='5' /><rect y='8' width='5' height='4' /><rect y='14' width='5' height='5' /><path d='M7 6h4a4 4 0 0 1 0 8H7' fill='none' stroke='#a8a8a8' strokeWidth='2' /></ArrangeIcon>
        <Chevron $flat $w={ 22 }><ChevronDown size={ 11 } color='#666' /></Chevron>
        <ListIcon width='14' height='13' viewBox='0 0 14 13' fill='#a8a8a8'><rect width='2' height='2' /><rect x='3' width='11' height='2' /><rect y='5' width='2' height='2' /><rect x='3' y='5' width='11' height='2' /><rect y='10' width='2' height='2' /><rect x='3' y='10' width='11' height='2' /></ListIcon>
      </ControlEnd>
    </ControlBar>

    <Workspace>
      <Toolbar>
        <CollapseStrip>‹‹</CollapseStrip>
        <Grip $m='5px auto 10px' />
        { TOOLS.map((row, i) => (
          <ToolRow key={ i } $h={ row.h }>
            <Tool $active={ row.active } $fly={ row.l[1] }>{ TOOL_ICONS[row.l[0]] }</Tool>
            <Tool $fly={ row.r[1] }>{ TOOL_ICONS[row.r[0]] }</Tool>
          </ToolRow>
        )) }
        <ColorWell>
          <SwapArrow width='14' height='14' viewBox='0 0 14 14' fill='none' stroke='#6a6a6a' strokeWidth='2'><path d='M1 3h8v9M6 1l3 3M9 12l3-3' /></SwapArrow>
          <StrokeWell />
          <DefaultColors />
          <Tooltip>?</Tooltip>
        </ColorWell>
        <ModeRow $h={ 32 }>
          <ModeSwatch $bg='#fff' />
          <ModeSwatch $bg='linear-gradient(90deg, #fff, #222)' />
          <ModeSwatch $bg='linear-gradient(135deg, #fff 42%, #e01f2c 42%, #e01f2c 58%, #fff 58%)' />
        </ModeRow>
        <ModeRow $h={ 26 }>
          <DrawMode $w={ 20 } $active><svg width='14' height='14' viewBox='0 0 14 14'><circle cx='6' cy='6' r='5' fill='none' stroke='#bbb' strokeWidth='1.500' /><rect x='6' y='6' width='8' height='8' fill='#bbb' /></svg></DrawMode>
          <DrawMode $w={ 20 }><svg width='14' height='14' viewBox='0 0 14 14'><circle cx='6' cy='6' r='5' fill='#888' stroke='#bbb' strokeWidth='1.500' /><rect x='7' y='7' width='7' height='7' fill='#ccc' /></svg></DrawMode>
          <DrawMode $w={ 20 }><svg width='14' height='14' viewBox='0 0 14 14'><circle cx='7' cy='7' r='5' fill='none' stroke='#666' strokeWidth='3' /></svg></DrawMode>
        </ModeRow>
        <ScreenMode>
          <svg width='28' height='20' viewBox='0 0 28 20'><rect x='1' y='6' width='15' height='13' fill='#777' stroke='#bbb' /><rect x='10' y='1' width='17' height='13' fill='#888' stroke='#bbb' /></svg>
        </ScreenMode>
      </Toolbar>

      <Center>
        <TabRow>
          <DocTab>
            <X size={ 12 } strokeWidth={ 2.2 } />
            <span>C2-U2.ai* @ 100% (RGB/GPU Preview)</span>
          </DocTab>
        </TabRow>
        <DocRow>
          <LeftRuler>
            { RULER_LEFT.map(n => (
              <VCell key={ n }><VLabel>{ n }</VLabel></VCell>
            )) }
          </LeftRuler>
          <MainCol>
            <TopRuler>
              { RULER_TOP.map((n, i) => <HCell key={ i }>{ n }</HCell>) }
            </TopRuler>
            <Canvas>
              <Artboard><Shirt /></Artboard>
            </Canvas>
          </MainCol>
          <VScroll>
            <ChevronUp size={ 14 } />
            <ChevronDown size={ 14 } />
          </VScroll>
        </DocRow>
        <StatusBar>
          <StatusField $w={ 57 }>100%</StatusField>
          <Chevron $flat $w={ 21 }>{ SMALL_CHEV }</Chevron>
          <NavArrow $ml={ 9 } width='12' height='10' viewBox='0 0 12 10' fill='#666'><rect width='2' height='10' /><path d='M11 0v10L4 5z' /></NavArrow>
          <NavArrow $ml={ 10 } width='8' height='10' viewBox='0 0 8 10' fill='#666'><path d='M8 0v10L0 5z' /></NavArrow>
          <StatusField $ml={ 6 } $w={ 45 }>1</StatusField>
          <Chevron $flat $w={ 22 }>{ SMALL_CHEV }</Chevron>
          <NavArrow $ml={ 12 } width='8' height='10' viewBox='0 0 8 10' fill='#666'><path d='M0 0v10l8-5z' /></NavArrow>
          <NavArrow $ml={ 9 } width='12' height='10' viewBox='0 0 12 10' fill='#666'><path d='M1 0v10l7-5z' /><rect x='10' width='2' height='10' /></NavArrow>
          <StatusText $ml={ 97 } $w={ 145 }>Selection</StatusText>
          <NavArrow $ml={ 0 } width='8' height='10' viewBox='0 0 8 10' fill='#bbb'><path d='M0 0v10l8-5z' /></NavArrow>
          <HScroll>
            <ChevronLeft size={ 14 } />
            <ChevronRight size={ 14 } />
          </HScroll>
        </StatusBar>
      </Center>

      <Dock>
        <CollapseStrip $right>‹‹</CollapseStrip>
        { DOCK.map((group, i) => (
          <DockGroup key={ i } $double={ group.length > 1 }>
            <Grip $m='0 auto 5px' />
            { group.map(item => (
              <DockItem key={ item[1] }>
                <DockIcon>{ item[0] ? DOCK_ICONS[item[0]] : item[2] }</DockIcon>
                { item[1] }
              </DockItem>
            )) }
          </DockGroup>
        )) }
      </Dock>
    </Workspace>

    <VThumb />
    <HThumb />

    <LayersPanel>
      <PanelHead><X size={ 12 } strokeWidth={ 2 } /><span>‹‹</span></PanelHead>
      <PanelTabs><LayersTab>Layers</LayersTab><MenuLines /></PanelTabs>
      <LayerList>
        { LAYERS.map(layer => (
          <LayerRow key={ layer.name } $selected={ layer.selected }>
            <VisCell>{ layer.eye && <EyeIcon /> }</VisCell>
            <VisCell>{ layer.lock && <LockIcon /> }</VisCell>
            <LayerColor $c={ layer.color } />
            <Expand>{ layer.arrow && <ChevronRight size={ 13 } strokeWidth={ 2 } /> }</Expand>
            <LayerThumb layer={ layer } />
            <LayerName>{ layer.name }</LayerName>
            <TargetRing $selected={ layer.selected } />
            { layer.selected && <SelectedDot /> }
          </LayerRow>
        )) }
      </LayerList>
      <PanelFoot>
        <span>4 Layers</span>
        <FootIcons>
          <FootCell><SquareArrowOutUpRight size={ 16 } strokeWidth={ 1.3 } /></FootCell>
          <FootCell><FlippedSearch size={ 16 } strokeWidth={ 1.5 } /></FootCell>
          <FootCell><svg width='14' height='14' viewBox='0 0 14 14'><rect x='4' y='4' width='10' height='10' fill='#666' /><rect x='1' y='1' width='9' height='9' fill='none' stroke='#ccc' strokeWidth='1.500' /></svg></FootCell>
          <FootCell><svg width='18' height='14' viewBox='0 0 18 14' fill='#c0c0c0'><path d='M7 1h11v12H9zM1 1v5h5' stroke='#c0c0c0' fill='#c0c0c0' /></svg></FootCell>
          <FootCell><svg width='13' height='13' viewBox='0 0 13 13' fill='#c0c0c0'><path d='M0 0h13v13H4V9H0z' /></svg></FootCell>
          <FootCell><Trash2 size={ 15 } strokeWidth={ 1.4 } /></FootCell>
        </FootIcons>
      </PanelFoot>
      <ResizeStrip><Grip $m='3px auto 0' /></ResizeStrip>
      <CursorMark width='14' height='20' viewBox='0 0 14 20'>
        <path d='M1 1v15l4-3 3 6 3-1-3-6h5z' fill='#111' stroke='#fff' strokeWidth='1' />
      </CursorMark>
    </LayersPanel>

    <LogoBadge width='102' height='102' viewBox='0 0 306 306'>
      <circle cx='153' cy='153' r='153' fill='#fff' />
      <path d='M81 152L112 104 153 155 193 104 227 152 190 205 120 205Z' fill='#cc0000' />
    </LogoBadge>
  </Root>
);

export default App;
